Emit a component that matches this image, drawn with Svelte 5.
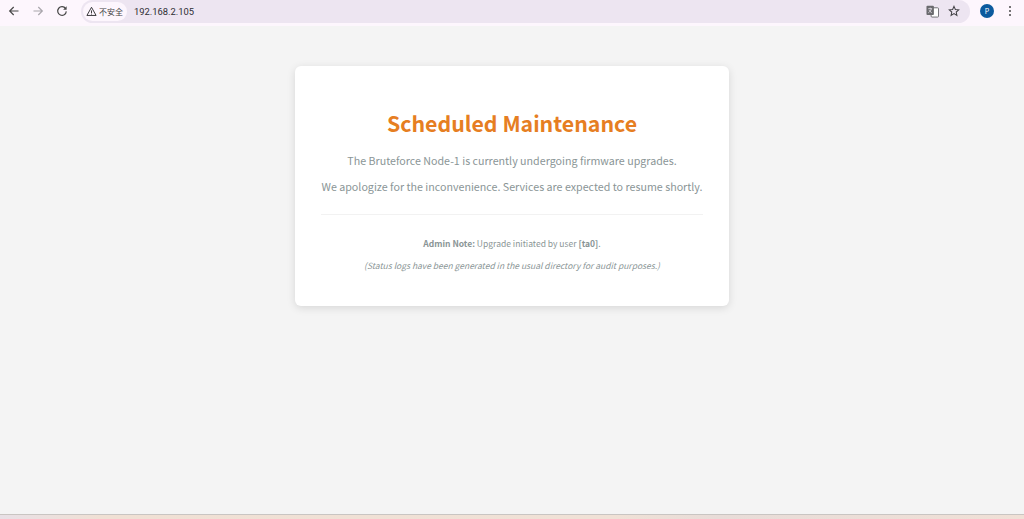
<script lang="ts">
  const address = '192.168.2.105'
</script>

<div class="window">
  <header class="toolbar">
    <button class="tool tool--back" aria-label="Back">
      <svg viewBox="0 0 16 16" width="16" height="16"><path d="M12.500 8H4M7.700 4 3.700 8 7.700 12" /></svg>
    </button>
    <button class="tool tool--forward" aria-label="Forward">
      <svg viewBox="0 0 16 16" width="16" height="16"><path d="M3.500 8H12M8.300 4 12.300 8 8.300 12" /></svg>
    </button>
    <button class="tool tool--reload" aria-label="Reload">
      <svg viewBox="0 0 16 16" width="16" height="16"><path d="M11.600 5.600A4.300 4.300 0 1 0 12.300 8.400" /><path class="solid" d="M12.600 3.200v3.500H9.100z" /></svg>
    </button>
    <div class="omnibox">
      <span class="chip">
        <svg viewBox="0 0 12 12" width="11" height="11"><path class="thin" d="M6 1.400 11 10.300H1z" /><path class="thin" d="M6 4.800v3M6 8.400v.9" /></svg>
        <span class="chip__label">不安全</span>
      </span>
      <span class="url">{address}</span>
      <span class="omnibox__end">
        <svg class="translate" viewBox="0 0 14 14" width="13" height="13">
          <rect class="translate__back" x="5.500" y="3" width="8" height="10" rx="1" />
          <rect class="translate__front" x="0.500" y="0.800" width="8" height="10" rx="1" />
          <path class="translate__glyph" d="M2.400 4h4.200M4.500 2.800V4M5.800 4C5.400 6 4 7.600 2.500 8.400M3.300 5.500c.6 1.200 1.600 2.200 2.900 2.800" />
        </svg>
        <svg class="star" viewBox="0 0 14 14" width="12" height="12"><path d="M7 1.600 8.600 5.200l3.900.4-2.900 2.600.8 3.900L7 10.100l-3.400 2 .8-3.900L1.500 5.600l3.900-.4z" /></svg>
      </span>
    </div>
    <span class="avatar">P</span>
    <span class="menu"><i></i><i></i><i></i></span>
  </header>

  <main class="page">
    <section class="card">
      <h1>Scheduled Maintenance</h1>
      <p>The Bruteforce Node-1 is currently undergoing firmware upgrades.</p>
      <p>We apologize for the inconvenience. Services are expected to resume shortly.</p>
      <div class="note">
        <p><strong>Admin Note:</strong> Upgrade initiated by user <strong>[ta0]</strong>.</p>
        <p><em>(Status logs have been generated in the usual directory for audit purposes.)</em></p>
      </div>
    </section>
  </main>

  <footer class="strip"></footer>
</div>

<style>
  :global(body) {
    margin: 0;
    background: #f4f4f4;
    font-family: "Noto Sans CJK SC", "Noto Sans", sans-serif;
  }

  .window {
    height: 519px;
    display: flex;
    flex-direction: column;
    overflow: hidden;
  }

  .toolbar {
    height: 26px;
    flex: none;
    display: flex;
    align-items: center;
    padding: 0 0 4px 6px;
    background: #fdf6fd;
    box-sizing: border-box;
  }

  .tool {
    width: 16px;
    height: 16px;
    padding: 0;
    margin-right: 8px;
    border: 0;
    background: none;
    color: #474747;
    display: flex;
  }

  .tool--forward {
    color: #a9a6ac;
  }

  .tool--reload {
    margin-right: 11px;
  }

  .tool svg path {
    fill: none;
    stroke: currentColor;
    stroke-width: 1.2;
  }

  .tool svg path.solid {
    fill: currentColor;
    stroke: none;
  }

  .omnibox {
    width: 889px;
    height: 23px;
    flex: none;
    display: flex;
    align-items: center;
    padding-left: 2px;
    box-sizing: border-box;
    border-radius: 12px;
    background: #ede5f1;
  }

  .chip {
    height: 19px;
    padding: 0 4px 0 3px;
    display: flex;
    align-items: center;
    gap: 2px;
    border-radius: 10px;
    background: #fdf6fd;
  }

  .chip svg path.thin {
    fill: none;
    stroke: #2a2a2c;
    stroke-width: 1;
  }

  .chip__label {
    font-size: 8px;
    color: #444;
  }

  .url {
    margin-left: 7px;
    font-family: Roboto, "Liberation Sans", sans-serif;
    font-size: 9.4px;
    color: #2e2d33;
  }

  .omnibox__end {
    margin-left: auto;
    margin-right: 10px;
    display: flex;
    align-items: center;
    gap: 9px;
  }

  .translate__back {
    fill: #fff;
    stroke: #6a6a6e;
  }

  .translate__front {
    fill: #6a6a6e;
  }

  .translate__glyph {
    fill: none;
    stroke: #f1ecf4;
    stroke-width: 0.8;
  }

  .star path {
    fill: none;
    stroke: #414144;
    stroke-width: 1.2;
  }

  .avatar {
    width: 14px;
    height: 14px;
    margin-left: 10px;
    flex: none;
    border-radius: 50%;
    background: #0b5a9e;
    color: #fff;
    font-size: 7px;
    line-height: 14px;
    text-align: center;
  }

  .menu {
    margin-left: 15px;
    display: flex;
    flex-direction: column;
    gap: 2px;
  }

  .menu i {
    width: 2px;
    height: 2px;
    border-radius: 50%;
    background: #474747;
  }

  .page {
    flex: 1;
    display: flex;
    justify-content: center;
    align-items: flex-start;
    padding-top: 40px;
  }

  .card {
    width: 434px;
    height: 240px;
    padding: 38px 26px 0;
    box-sizing: border-box;
    text-align: center;
    background: #fff;
    border-radius: 6px;
    box-shadow: 0 2px 8px rgba(0, 0, 0, 0.12);
  }

  h1 {
    margin: 0 0 11px;
    font-size: 21.3px;
    line-height: 38px;
    font-weight: 700;
    color: #e67e22;
  }

  p {
    margin: 0 0 10px;
    font-size: 10.7px;
    line-height: 16px;
    color: #8a9596;
  }

  .note {
    margin-top: 19px;
    padding-top: 22px;
    border-top: 1px solid #f2f2f2;
  }

  .note p {
    margin: 0 0 9px;
    font-size: 8.5px;
    line-height: 13px;
  }

  .note strong {
    font-weight: 700;
  }

  .strip {
    height: 4px;
    flex: none;
    border-top: 1px solid #c9c5c2;
    background: linear-gradient(90deg, #e8e0e6, #f0e0d4 10%, #f0e1d6 60%, #e8dcd8 70%, #f0e0d6);
  }
</style>
